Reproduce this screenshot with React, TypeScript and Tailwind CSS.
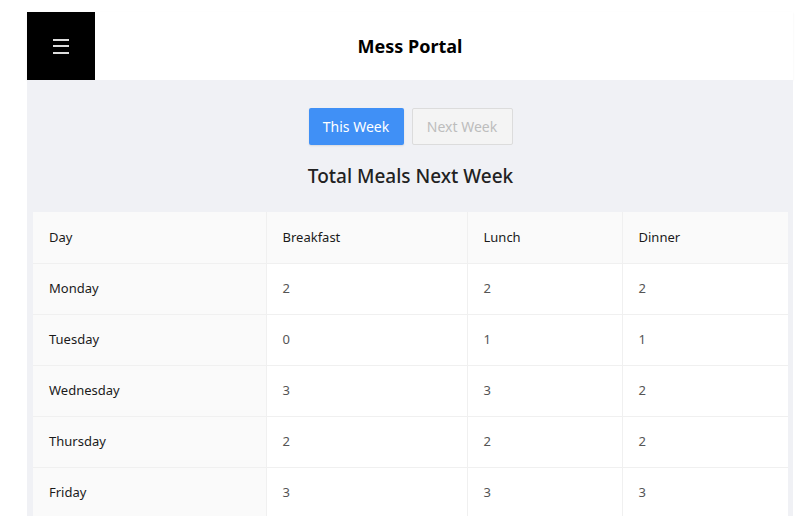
const rows = [
  { day: "Monday", breakfast: 2, lunch: 2, dinner: 2 },
  { day: "Tuesday", breakfast: 0, lunch: 1, dinner: 1 },
  { day: "Wednesday", breakfast: 3, lunch: 3, dinner: 2 },
  { day: "Thursday", breakfast: 2, lunch: 2, dinner: 2 },
  { day: "Friday", breakfast: 3, lunch: 3, dinner: 3 },
];

const App = () => {
  return (
    <div
      className="min-h-[516px] bg-white text-[#222]"
      style={{ fontFamily: '"Noto Sans", "Open Sans", sans-serif' }}
    >
      <div className="ml-[27px] w-[766px] pt-[12px]">
        <header className="grid grid-cols-[68px_1fr_68px] h-[68px] bg-white shadow-[0_1px_2px_rgba(0,0,0,0.06)]">
          <button className="flex flex-col items-center justify-center gap-[4.5px] bg-black">
            <span className="block w-[16px] h-[2px] bg-[#ddd]" />
            <span className="block w-[16px] h-[2px] bg-[#ddd]" />
            <span className="block w-[16px] h-[2px] bg-[#ddd]" />
          </button>
          <h1 className="flex items-center justify-center text-[18px] font-bold text-black">
            Mess Portal
          </h1>
          <div />
        </header>

        <main className="bg-[#f0f1f5] pt-[28px] pl-[6px] pr-[5px]">
          <div className="flex justify-center gap-[8px]">
            <button className="w-[95px] h-[37px] rounded-[2px] bg-[#4090f6] text-white text-[14px] shadow-[0_1px_2px_rgba(0,0,0,0.1)]">
              This Week
            </button>
            <button className="w-[101px] h-[37px] rounded-[2px] border border-[#dcdcdc] bg-[#f4f4f4] text-[#bdbdbd] text-[14px]">
              Next Week
            </button>
          </div>
          <h2 className="mt-[18px] text-center text-[19px] font-medium text-[#222] leading-[26px]">
            Total Meals Next Week
          </h2>
          <table className="mt-[23px] w-full border-collapse text-[13px]">
            <colgroup>
              <col className="w-[233px]" />
              <col className="w-[201px]" />
              <col className="w-[155px]" />
              <col />
            </colgroup>
            <thead>
              <tr className="h-[51px] bg-[#fafafa]">
                {["Day", "Breakfast", "Lunch", "Dinner"].map((h, i) => (
                  <th
                    key={h}
                    className={`pl-[16px] text-left font-normal text-[#1a1a1a] border-b border-[#f0f0f0] ${
                      i > 0 ? "border-l" : ""
                    }`}
                  >
                    {h}
                  </th>
                ))}
              </tr>
            </thead>
            <tbody>
              {rows.map((r) => (
                <tr key={r.day} className="h-[51px] bg-white">
                  <td className="pl-[16px] bg-[#fafafa] font-normal text-[#1a1a1a] border-b border-[#f0f0f0]">
                    {r.day}
                  </td>
                  <td className="pl-[16px] text-[#555] border-b border-l border-[#f0f0f0]">
                    {r.breakfast}
                  </td>
                  <td className="pl-[16px] text-[#555] border-b border-l border-[#f0f0f0]">
                    {r.lunch}
                  </td>
                  <td className="pl-[16px] text-[#555] border-b border-l border-[#f0f0f0]">
                    {r.dinner}
                  </td>
                </tr>
              ))}
            </tbody>
          </table>
        </main>
      </div>
    </div>
  );
};

export default App;
